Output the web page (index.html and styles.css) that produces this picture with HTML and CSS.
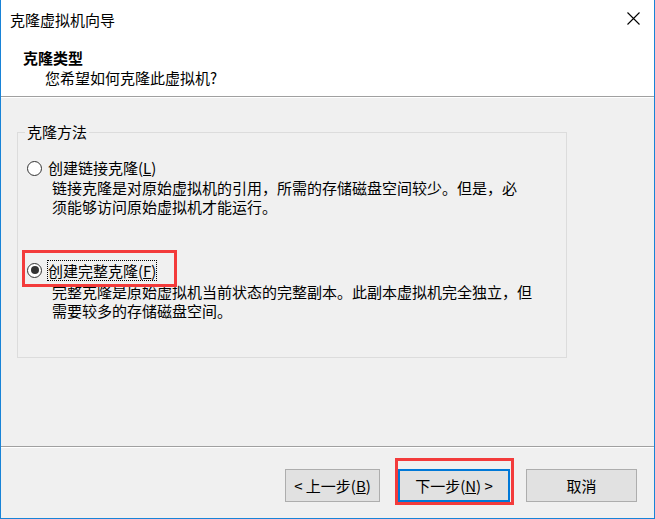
FILE: index.html
```html
<!DOCTYPE html>
<html lang="zh-CN">
<head>
<meta charset="utf-8">
<title>克隆虚拟机向导</title>
<link rel="stylesheet" href="styles.css">
</head>
<body>
<div class="window">
  <div class="titlebar">
    <span class="title">克隆虚拟机向导</span>
    <svg class="close" width="13" height="13" viewBox="0 0 13 13"><path d="M0.5 0.5 L12.5 12.5 M12.5 0.5 L0.5 12.5" stroke="#000" stroke-width="1.1" fill="none"/></svg>
  </div>
  <div class="header">
    <div class="h-title">克隆类型</div>
    <div class="h-sub">您希望如何克隆此虚拟机?</div>
  </div>
  <div class="main">
    <fieldset class="group">
      <legend class="legend">克隆方法</legend>
      <div class="option opt1">
        <span class="radio"></span>
        <span class="label">创建链接克隆(<u>L</u>)</span>
      </div>
      <div class="desc desc1">链接克隆是对原始虚拟机的引用，所需的存储磁盘空间较少。但是，必<br>须能够访问原始虚拟机才能运行。</div>
      <div class="option opt2">
        <span class="radio checked"></span>
        <span class="label focus">创建完整克隆(<u>F</u>)</span>
      </div>
      <div class="desc desc2">完整克隆是原始虚拟机当前状态的完整副本。此副本虚拟机完全独立，但<br>需要较多的存储磁盘空间。</div>
    </fieldset>
  </div>
  <div class="footer">
    <button class="btn btn-back">&lt; 上一步(<u>B</u>)</button>
    <button class="btn btn-next">下一步(<u>N</u>) &gt;</button>
    <button class="btn btn-cancel">取消</button>
  </div>
  <div class="mark mark-radio"></div>
  <div class="mark mark-next"></div>
</div>
</body>
</html>
```
FILE: styles.css
```css
* { box-sizing: border-box; }
html, body { margin: 0; padding: 0; }
body {
  font-family: "Noto Sans CJK SC", "Microsoft YaHei", sans-serif;
  font-size: 15px;
  color: #000;
  background: #fff;
}
.window {
  position: relative;
  width: 655px;
  height: 519px;
  border: 1px solid #1883d7;
  border-top: none;
  background: #f0f0f0;
  display: flex;
  flex-direction: column;
  overflow: hidden;
}
.titlebar {
  height: 38px;
  background: #fff;
  display: flex;
  align-items: flex-start;
  padding-left: 9px;
}
.title {
  line-height: 20px;
  margin-top: 10px;
}
.close {
  margin-left: auto;
  margin-right: 14px;
  margin-top: 12px;
}
.header {
  height: 59px;
  background: #fff;
  border-bottom: 1px solid #a0a0a0;
  padding-top: 10px;
}
.h-title {
  font-weight: bold;
  line-height: 20px;
  padding-left: 22px;
}
.h-sub {
  line-height: 20px;
  padding-left: 44px;
}
.main {
  height: 349px;
  border-top: 1px solid #fff;
  padding-top: 24px;
}
.group {
  margin: 0 0 0 16px;
  padding: 0;
  width: 550px;
  height: 236px;
  border: 1px solid #dcdcdc;
}
.legend {
  margin-left: 7px;
  padding: 0 2px;
  line-height: 20px;
}
.option {
  display: flex;
  align-items: center;
  height: 20px;
  line-height: 20px;
}
.opt1 { margin-top: 16px; }
.opt2 { margin-top: 44px; }
.radio {
  flex: none;
  width: 15px;
  height: 15px;
  border: 1px solid #333;
  border-radius: 50%;
  background: #fff;
  margin-left: 9px;
  margin-right: 6px;
  display: flex;
  align-items: center;
  justify-content: center;
}
.radio.checked::after {
  content: "";
  width: 8px;
  height: 8px;
  border-radius: 50%;
  background: #333;
}
.label { white-space: nowrap; }
.label.focus {
  display: inline-block;
  line-height: 19px;
  outline: 1px dotted #000;
  outline-offset: 0;
}
.desc {
  padding-left: 34px;
  line-height: 19px;
  white-space: nowrap;
}
.desc2 { margin-top: 2px; }
.footer {
  flex: 1;
  border-top: 1px solid #a0a0a0;
  box-shadow: inset 0 1px 0 #fff;
  display: flex;
  align-items: flex-start;
  padding-top: 22px;
  padding-left: 284px;
}
.btn {
  font-family: inherit;
  font-size: 15px;
  height: 33px;
  padding: 0;
  background: #e1e1e1;
  border: 1px solid #adadad;
  color: #000;
  line-height: 20px;
}
.btn-back { width: 95px; }
.btn-next {
  width: 112px;
  margin-left: 18px;
  border: 2px solid #0078d7;
}
.btn-cancel {
  width: 111px;
  margin-left: 16px;
}
.mark {
  position: absolute;
  border: 3px solid #f33b3b;
}
.mark-radio {
  left: 21px;
  top: 250px;
  width: 155px;
  height: 37px;
}
.mark-next {
  left: 394px;
  top: 458px;
  width: 119px;
  height: 47px;
}
```
